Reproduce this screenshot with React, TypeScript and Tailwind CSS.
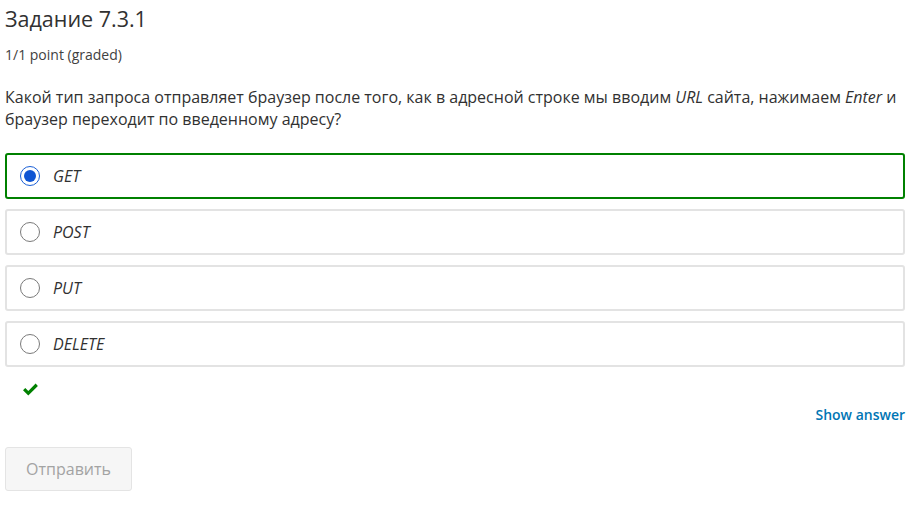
import React from "react";

const font = { fontFamily: '"Open Sans", "Noto Sans", sans-serif' };

function Option({ label, selected }: { label: string; selected?: boolean }) {
  return (
    <label
      className={
        "flex items-center h-[46px] rounded-[3px] border-2 pl-[13px] " +
        (selected ? "border-[#008100]" : "border-[#e3e3e3]")
      }
    >
      {selected ? (
        <span className="flex items-center justify-center w-[20px] h-[20px] rounded-full border-[1.5px] border-[#1a5fd6] bg-white">
          <span className="block w-[12px] h-[12px] rounded-full bg-[#0f55d3]" />
        </span>
      ) : (
        <span className="block w-[20px] h-[20px] rounded-full border border-[#7a7a7a] bg-white" />
      )}
      <span className="ml-[13px] italic text-[16px] text-[#313131]">{label}</span>
    </label>
  );
}

export default function App() {
  return (
    <div className="w-[914px] h-[515px] bg-white px-[5px] text-[#313131]" style={font}>
      <h2 className="pt-[5px] text-[21.5px] leading-[28px] text-[#313131]">Задание 7.3.1</h2>
      <div className="mt-[13px] text-[14px] leading-[18px] text-[#414141]">1/1 point (graded)</div>
      <p className="mt-[22px] text-[16px] leading-[22px] text-[#313131]">
        Какой тип запроса отправляет браузер после того, как в адресной строке мы вводим <em>URL</em> сайта,
        нажимаем <em>Enter</em> и браузер переходит по введенному адресу?
      </p>
      <div className="mt-[23px] w-[900px] flex flex-col gap-[10px]">
        <Option label="GET" selected />
        <Option label="POST" />
        <Option label="PUT" />
        <Option label="DELETE" />
      </div>
      <div className="mt-[16px] pl-[17px]">
        <svg width="17" height="13" viewBox="0 0 17 13">
          <path d="M1 7.2 L3.3 4.9 L6.3 7.9 L13.6 0.6 L15.9 2.9 L6.3 12.4 Z" fill="#008100" />
        </svg>
      </div>
      <div className="w-[900px] flex justify-end mt-[8px]">
        <span className="text-[14px] font-semibold text-[#0075b4]">Show answer</span>
      </div>
      <button className="mt-[22px] w-[127px] h-[44px] rounded-[3px] border border-[#e4e4e4] bg-[#f6f6f6] text-[16px] text-[#a3a3a3]">
        Отправить
      </button>
    </div>
  );
}
